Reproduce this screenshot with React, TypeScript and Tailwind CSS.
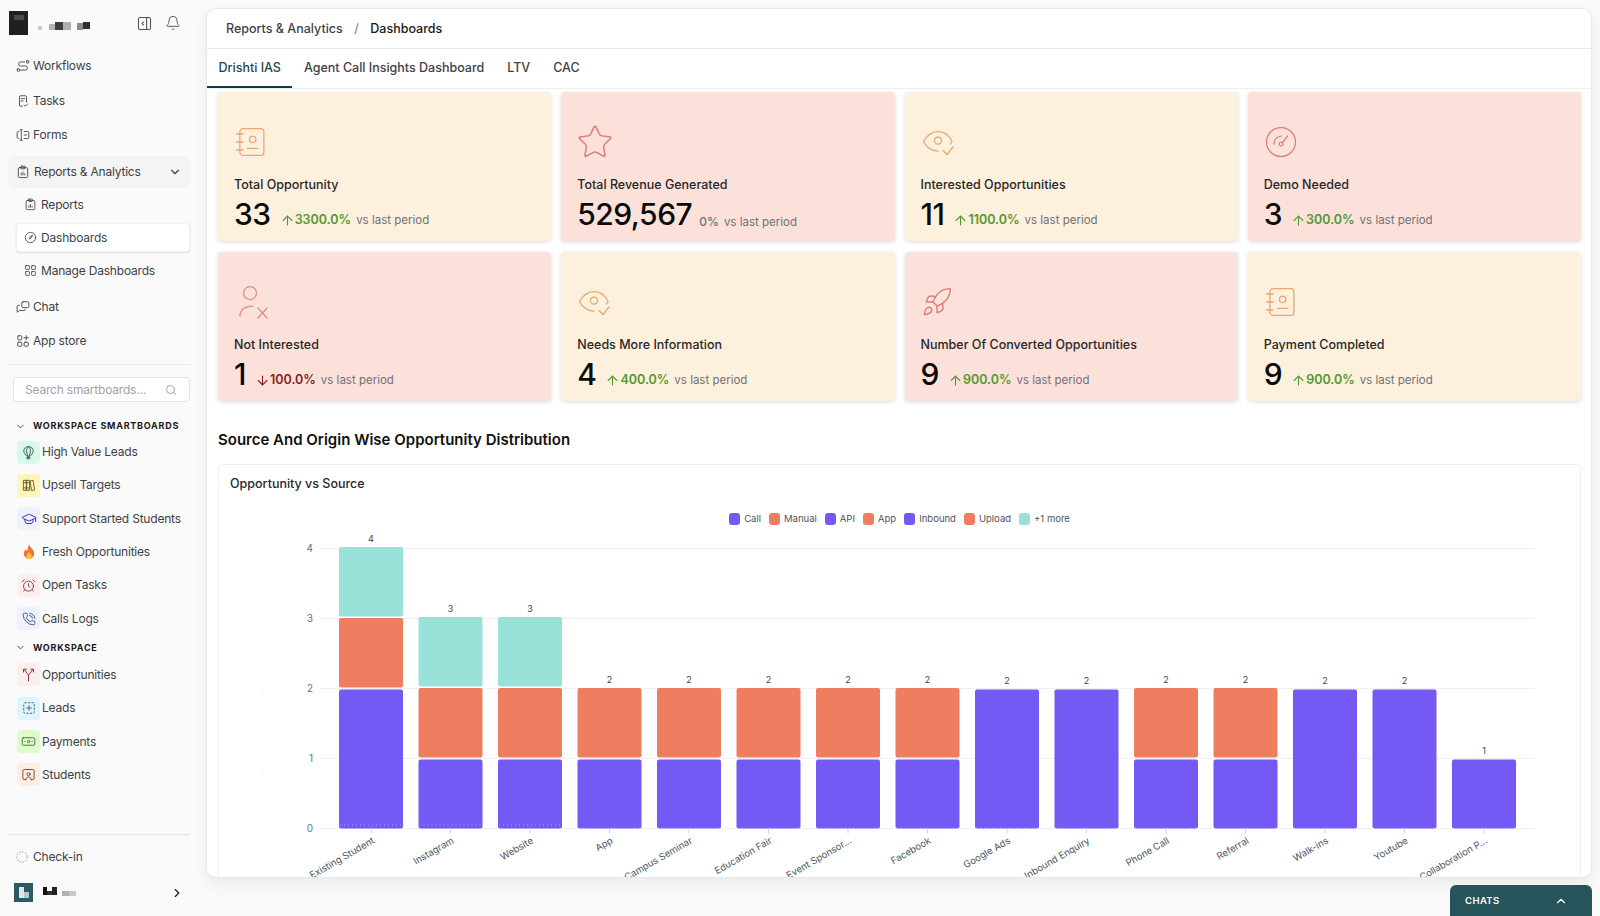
import React from "react";
import { ChevronDown, ChevronRight, ChevronUp, Search, Bell, Star, Rocket, ArrowUp, ArrowDown, GraduationCap, AlarmClock, PhoneCall, Banknote, LayoutGrid } from "lucide-react";

const S = ({ children, size = 16, sw = 1.5, className = "" }: { children: React.ReactNode; size?: number; sw?: number; className?: string }) => (
  <svg width={size} height={size} viewBox="0 0 24 24" fill="none" stroke="currentColor" strokeWidth={sw} strokeLinecap="round" strokeLinejoin="round" className={className}>
    {children}
  </svg>
);

const WorkflowIcon = () => (<S size={14}><rect x="2" y="17" width="4" height="4" rx="1" /><rect x="18" y="3" width="4" height="4" rx="1" /><path d="M7 19h9a3.5 3.5 0 0 0 0-7H8a3.5 3.5 0 0 1 0-7h7" /></S>);
const TasksIcon = () => (<S size={14}><path d="M11 21H8a2 2 0 0 1-2-2V5a2 2 0 0 1 2-2h8a2 2 0 0 1 2 2v9" /><path d="M9 8h6M9 12h3" /><path d="m14 19 2 2 4-4" /></S>);
const FormsIcon = () => (<S size={14}><path d="M5 6H4a2 2 0 0 0-2 2v8a2 2 0 0 0 2 2h1" /><path d="M14 6h6a2 2 0 0 1 2 2v8a2 2 0 0 1-2 2h-6" /><path d="M7 3h4M7 21h4M9 3v18" /><path d="M14 12h4" /></S>);
const DashIcon = () => (<S size={13}><circle cx="12" cy="12" r="9.5" /><path d="M15.5 8.5 13 13l-3 1.5 1-3.5z" /></S>);
const AppStoreIcon = () => (<S size={14}><rect x="3" y="3" width="7" height="7" rx="1.5" /><rect x="3" y="14" width="7" height="7" rx="1.5" /><rect x="14" y="14" width="7" height="7" rx="1.5" /><path d="M17.5 3v7M14 6.5h7" /></S>);
const PanelIcon = () => (<S size={17}><rect x="3.5" y="3.5" width="17" height="17" rx="2" /><path d="M15 3.5v17" /><path d="m10.5 10-2 2 2 2" /></S>);
const ReportIcon = ({ size = 14 }: { size?: number }) => (<S size={size}><rect x="4" y="4.500" width="16" height="17" rx="2" /><rect x="8.500" y="2" width="7" height="4.500" rx="1" /><path d="M9 17v-3M12 17v-5M15 17v-2" /></S>);
const ChatIcon = () => (<S size={14}><rect x="10" y="3" width="12" height="10" rx="2" /><path d="M6 9H4a2 2 0 0 0-2 2v10l4-3h8a2 2 0 0 0 2-2" /></S>);

const BookIcon = () => (
  <svg width="32" height="32" viewBox="0 0 30 30" fill="none" stroke="currentColor" strokeWidth="1.2" strokeLinecap="round" strokeLinejoin="round">
    <rect x="5.500" y="2.500" width="22.500" height="25" rx="3" />
    <path d="M2.500 7.500h6M2.500 15h6M2.500 22.500h6" />
    <circle cx="17.500" cy="12.500" r="3" />
    <path d="M12.500 21h10" />
  </svg>
);
const EyeCheckIcon = () => (
  <svg width="34" height="34" viewBox="0 0 34 34" fill="none" stroke="currentColor" strokeWidth="1.25" strokeLinecap="round" strokeLinejoin="round">
    <path d="M31 16.5C28 10 23 6.5 17 6.5S6 10 2.500 16.500C5.500 22.500 11 26 17 26" />
    <path d="M31 16.500c-.5 1-1 1.800-1.600 2.600" />
    <circle cx="17" cy="15.500" r="3.500" />
    <path d="m22 25.500 4 4 6-7.500" />
  </svg>
);
const GaugeIcon = () => (
  <svg width="32" height="32" viewBox="0 0 32 32" fill="none" stroke="currentColor" strokeWidth="1.25" strokeLinecap="round" strokeLinejoin="round" className="ml-[1px]">
    <circle cx="16" cy="16" r="14.500" />
    <circle cx="16" cy="18" r="1.800" />
    <path d="m17.500 16.500 5-6.500" />
    <path d="M9 18c0-4.500 3-7.500 7.500-8" />
  </svg>
);
const UserXIcon = () => (
  <svg width="36" height="36" viewBox="0 0 36 36" fill="none" stroke="currentColor" strokeWidth="1.25" strokeLinecap="round" strokeLinejoin="round">
    <circle cx="16" cy="9" r="6.500" />
    <path d="M6 32c0-6 5-10 13-10" />
    <path d="m24 24 9 10M33 24l-9 10" />
  </svg>
);
const RocketIcon = () => <Rocket size={32} strokeWidth={1.05} />;

const Balloon = () => (<S size={15} sw={1.6}><path d="M12 2.500c-4.500 0-7.500 3.200-7.500 7 0 4 3.500 6.500 5 8.500h5c1.500-2 5-4.500 5-8.500 0-3.800-3-7-7.500-7z" /><path d="M12 2.500c-2 1.500-3 4-3 7s1.200 6 2 8.500M12 2.500c2 1.500 3 4 3 7s-1.200 6-2 8.500" /><rect x="10" y="20" width="4" height="2" /></S>);
const Books = () => (<S size={14} sw={1.6}><rect x="3" y="4" width="5" height="17" /><rect x="8" y="4" width="5" height="17" /><path d="m14.500 5 4.500-1 2.500 16.500-4.500 1z" /><path d="M3 8h10M3 17h10" /></S>);
const Flame = () => (
  <svg width="14" height="16" viewBox="0 0 24 28">
    <path d="M12 1c1 5 9 8 9 16a9 9 0 0 1-18 0c0-4 2-6 3-8 1 2 2 3 3 3 1-4 1-7 3-11z" fill="#f4702c" />
    <path d="M12 13c1 3 5 4 5 8.500a5 5 0 0 1-10 0c0-3 3-5 5-8.500z" fill="#fbbf3d" />
  </svg>
);
const SplitY = () => (<S size={15} sw={1.6}><path d="M12 22v-9L5 4M12 13l7-9" /><path d="M4 8V3.500h4.500M15.500 3.500H20V8" /></S>);
const LeadsIcon = () => (<S size={14} sw={1.6}><path strokeDasharray="2.500 3.500" d="M5 3h14a2 2 0 0 1 2 2v14a2 2 0 0 1-2 2H5a2 2 0 0 1-2-2V5a2 2 0 0 1 2-2z" /><path d="M12 8v8M8 12h8" /></S>);
const StudentIcon = () => (<S size={15} sw={1.5}><path d="M7 20H5a2 2 0 0 1-2-2V6a2 2 0 0 1 2-2h14a2 2 0 0 1 2 2v12a2 2 0 0 1-2 2h-2" /><circle cx="12" cy="11.500" r="2.500" /><path d="M7.500 21c0-3 2-5 4.500-5s4.500 2 4.500 5" /></S>);

const cream = "bg-[#fdf0dd]";
const pink = "bg-[#fbe1d9]";
const cards = [
  { l: "Total Opportunity", v: "33", d: "3300.0%", bg: cream, ic: <BookIcon />, c: "text-[#eba56e]" },
  { l: "Total Revenue Generated", v: "529,567", d: "0%", bg: pink, ic: <Star size={38} strokeWidth={0.95} className="-ml-[1px]" />, c: "text-[#dc7f75]", flat: true },
  { l: "Interested Opportunities", v: "11", d: "1100.0%", bg: cream, ic: <EyeCheckIcon />, c: "text-[#eba56e]" },
  { l: "Demo Needed", v: "3", d: "300.0%", bg: pink, ic: <GaugeIcon />, c: "text-[#dc7f75]" },
  { l: "Not Interested", v: "1", d: "100.0%", bg: pink, ic: <UserXIcon />, c: "text-[#e08c80]", down: true },
  { l: "Needs More Information", v: "4", d: "400.0%", bg: cream, ic: <EyeCheckIcon />, c: "text-[#eba56e]" },
  { l: "Number Of Converted Opportunities", v: "9", d: "900.0%", bg: pink, ic: <RocketIcon />, c: "text-[#dc7f75]" },
  { l: "Payment Completed", v: "9", d: "900.0%", bg: cream, ic: <BookIcon />, c: "text-[#eba56e]" },
];

const Card = ({ l, v, d, bg, ic, c, flat, down }: any) => (
  <div className={`${bg} h-[149px] rounded-[4px] shadow-[0_1px_4px_rgba(0,0,0,0.14)] pl-[16px] flex flex-col`}>
    <div className={`h-[46px] mt-[27px] flex items-center ${c}`}>{ic}</div>
    <div className="mt-[11px] text-[12.500px] leading-[18px] font-medium text-[#27272a]">{l}</div>
    <div className="mt-0 flex items-baseline">
      <span className="text-[30px] leading-[40px] font-medium text-[#0a0a0a] tracking-[-0.5px]">{v}</span>
      {flat ? (
        <span className="ml-[7px] translate-y-[1px] text-[12px] font-medium text-[#71717a]">{d}</span>
      ) : (
        <span className={`ml-[9px] -translate-y-[1px] flex items-baseline text-[12.500px] font-semibold ${down ? "text-[#8b1a22]" : "text-[#4f9a2c]"}`}>
          {down ? <ArrowDown size={15} strokeWidth={1.7} className="self-center" /> : <ArrowUp size={15} strokeWidth={1.7} className="self-center" />}
          <span>{d}</span>
        </span>
      )}
      <span className={`ml-[5px] text-[11.500px] text-[#71717a] ${flat ? "translate-y-[1px]" : "-translate-y-[1px]"}`}>vs last period</span>
    </div>
  </div>
);

const navText = "text-[12px] tracking-[-0.2px] text-[#3f3f46]";
const Item = ({ icon, label }: any) => (
  <div className={`h-[34.500px] flex items-center pl-[16px] ${navText}`}>
    <span className="w-[17px] flex justify-start">{icon}</span>
    <span>{label}</span>
  </div>
);
const Sub = ({ icon, label }: any) => (
  <div className={`h-[33px] flex items-center pl-[24px] ${navText}`}>
    <span className="w-[17px] flex">{icon}</span>
    <span>{label}</span>
  </div>
);
const Board = ({ bg, color, icon, label }: any) => (
  <div className={`h-[33.300px] flex items-center pl-[17px] ${navText}`}>
    <span className={`w-[23px] h-[23px] rounded-[4px] flex items-center justify-center ${bg} ${color}`}>{icon}</span>
    <span className="ml-[2px]">{label}</span>
  </div>
);
const SectionHead = ({ label }: { label: string }) => (
  <div className="h-[19px] flex items-center pl-[15px] text-[9px] font-bold tracking-[0.75px] text-[#18181b]">
    <ChevronDown size={11} className="mr-[7px] text-[#3f3f46]" />
    {label}
  </div>
);

const P = "#7559f5", O = "#ef7d5f", T = "#9ae1da";
const bars: { n: string; s: string[] }[] = [
  { n: "Existing Student", s: ["2", "o", "t"] },
  { n: "Instagram", s: ["p", "o", "t"] },
  { n: "Website", s: ["p", "o", "t"] },
  { n: "App", s: ["p", "o"] },
  { n: "Campus Seminar", s: ["p", "o"] },
  { n: "Education Fair", s: ["p", "o"] },
  { n: "Event Sponsor...", s: ["p", "o"] },
  { n: "Facebook", s: ["p", "o"] },
  { n: "Google Ads", s: ["2"] },
  { n: "Inbound Enquiry", s: ["2"] },
  { n: "Phone Call", s: ["p", "o"] },
  { n: "Referral", s: ["p", "o"] },
  { n: "Walk-ins", s: ["2"] },
  { n: "Youtube", s: ["2"] },
  { n: "Collaboration P...", s: ["p"] },
];
const FONT = "Inter, sans-serif";
const OX = 219, OY = 532;
const Chart = () => {
  const yFor = (v: number) => 828.5 - v * 70 - OY;
  return (
    <svg width="1362" height="346" viewBox="0 0 1362 346" style={{ fontFamily: FONT }} className="block mt-[5.500px]">
      {[0, 1, 2, 3, 4].map((v) => (
        <g key={v}>
          <line x1={320 - OX} x2={1535 - OX} y1={yFor(v)} y2={yFor(v)} stroke="#eff0f2" />
          <text x={313 - OX} y={yFor(v) + 3.5} fontSize="10" fill="#6b7280" textAnchor="end">{v}</text>
        </g>
      ))}
      <circle cx={263 - OX} cy={691 - OY} r="0.500" fill="#c8c8c8" />
      <circle cx={263 - OX} cy={771 - OY} r="0.500" fill="#c8c8c8" />
      {bars.map((b, i) => {
        const cx = 371 + i * 79.5 - OX;
        let v = 0;
        const segs = b.s.map((k) => {
          const h = k === "2" ? 2 : 1;
          const from = v;
          v += h;
          return { from, to: v, fill: k === "2" || k === "p" ? P : k === "o" ? O : T };
        });
        const total = v;
        const labelGap = segs.length === 3 ? 7 : segs.length === 2 ? 6 : 5;
        return (
          <g key={b.n}>
            {segs.map((s, j) => (
              <rect key={j} x={cx - 32} width="64" y={yFor(s.to) + (j === 0 ? 1 : j === 1 ? -0.5 : -1.5)} height={j === 0 ? (s.to - s.from) * 70 - 1 : 69.5} rx="2" fill={s.fill} />
            ))}
            <line x1={cx - 31} x2={cx + 31} y1={yFor(0) - (i < 3 ? 3.5 : 0.5)} y2={yFor(0) - (i < 3 ? 3.5 : 0.5)} stroke="#ffffff" strokeOpacity="0.35" strokeDasharray="1 3" />
            <text x={cx} y={yFor(total) - labelGap} fontSize="9" fill="#3f3f46" textAnchor="middle">{total}</text>
            <line x1={cx} x2={cx} y1={yFor(0)} y2={yFor(0) + 5} stroke="#d4d4d8" />
            <text transform={`translate(${cx + 4} ${yFor(0) + 14}) rotate(-30)`} fontSize="9.500" fill="#4b5563" textAnchor="end">{b.n}</text>
          </g>
        );
      })}
    </svg>
  );
};

const legend: [string, string][] = [["Call", P], ["Manual", O], ["API", P], ["App", O], ["Inbound", P], ["Upload", O], ["+1 more", T]];

export default function App() {
  return (
    <div className="relative flex h-[916px] w-[1600px] overflow-hidden bg-[#fafafa] font-['Inter',sans-serif]">
      <aside className="w-[206px] shrink-0 flex flex-col h-full">
        <div className="h-[49px] flex items-start pt-[11px] pl-[9px] relative">
          <div className="w-[19px] h-[24px] bg-[#231f20] flex justify-center pt-[4px]"><div className="w-[10px] h-[5px] bg-[#4a4a4a]" /></div>
          <svg width="54" height="10" viewBox="0 0 54 10" className="ml-[10px] mt-[10px]">
            <rect x="0" y="5" width="4" height="4" fill="#c9c9c9" />
            <rect x="11" y="3" width="6" height="6" fill="#b5b5b5" />
            <rect x="17" y="1" width="8" height="8" fill="#3e3e3e" />
            <rect x="25" y="1" width="8" height="8" fill="#b0b0b0" />
            <rect x="39" y="2" width="6" height="7" fill="#8a8a8a" />
            <rect x="45" y="1" width="7" height="7" fill="#2f2f2f" />
          </svg>
          <span className="ml-[44px] mt-[4px] text-[#52525b]"><PanelIcon /></span>
          <span className="ml-[12px] mt-[4px] text-[#52525b]"><Bell size={16} strokeWidth={1.4} /></span>
        </div>
        <Item icon={<WorkflowIcon />} label="Workflows" />
        <Item icon={<TasksIcon />} label="Tasks" />
        <Item icon={<FormsIcon />} label="Forms" />
        <div className={`mt-[3.500px] ml-[8px] mr-[16px] h-[32px] rounded-[6px] bg-[#f4f4f5] flex items-center pl-[8px] pr-[8px] ${navText}`}>
          <span className="mr-[4px]"><ReportIcon /></span>
          <span>Reports &amp; Analytics</span>
          <ChevronDown size={14} className="ml-auto" />
        </div>
        <Sub icon={<ReportIcon size={13} />} label="Reports" />
        <div className="h-[33px] flex items-center ml-[16px] mr-[16px]">
          <div className={`h-[29px] w-full bg-white rounded-[4px] shadow-[0_1px_2px_rgba(0,0,0,0.12)] border border-[#f1f1f2] flex items-center pl-[7px] ${navText}`}>
            <span className="w-[17px] flex"><DashIcon /></span>Dashboards
          </div>
        </div>
        <Sub icon={<LayoutGrid size={13} strokeWidth={1.5} />} label="Manage Dashboards" />
        <div className="h-[2.500px]" />
        <Item icon={<ChatIcon />} label="Chat" />
        <Item icon={<AppStoreIcon />} label="App store" />
        <div className="mx-[8px] mr-[16px] mt-[5.500px] border-t border-[#ececee]" />
        <div className="mt-[12px] ml-[13px] mr-[16px] h-[25px] rounded-[4px] border border-[#e4e4e7] bg-white flex items-center pl-[11px] pr-[12px] text-[12px] tracking-[-0.2px] text-[#a1a1aa]">
          <span>Search smartboards...</span>
          <Search size={12} className="ml-auto" />
        </div>
        <div className="h-[14.500px]" />
        <SectionHead label="WORKSPACE SMARTBOARDS" />
        <Board bg="bg-[#d8f8ea]" color="text-[#3d6b58]" icon={<Balloon />} label="High Value Leads" />
        <Board bg="bg-[#fdf5b9]" color="text-[#6b5a24]" icon={<Books />} label="Upsell Targets" />
        <Board bg="bg-[#f1f1fe]" color="text-[#3730c4]" icon={<GraduationCap size={16} strokeWidth={1.5} />} label="Support Started Students" />
        <Board bg="" color="" icon={<Flame />} label="Fresh Opportunities" />
        <Board bg="bg-[#fdeeee]" color="text-[#8f3a40]" icon={<AlarmClock size={15} strokeWidth={1.5} />} label="Open Tasks" />
        <Board bg="bg-[#eef2fd]" color="text-[#334a7d]" icon={<PhoneCall size={14} strokeWidth={1.5} />} label="Calls Logs" />
        <div className="h-[3px]" />
        <SectionHead label="WORKSPACE" />
        <div className="h-[1px]" />
        <Board bg="bg-[#fdeeee]" color="text-[#96323c]" icon={<SplitY />} label="Opportunities" />
        <Board bg="bg-[#dff5fe]" color="text-[#3b6076]" icon={<LeadsIcon />} label="Leads" />
        <Board bg="bg-[#defcc9]" color="text-[#4a7041]" icon={<Banknote size={15} strokeWidth={1.5} />} label="Payments" />
        <Board bg="bg-[#fdeee3]" color="text-[#7c4a32]" icon={<StudentIcon />} label="Students" />
        <div className="mt-auto mx-[8px] mr-[16px] border-t border-[#e6e6e8] shadow-[0_1px_2px_rgba(0,0,0,0.05)]" />
        <div className={`h-[43px] flex items-center pl-[16px] ${navText}`}>
          <svg width="12" height="12" viewBox="0 0 12 12" className="mr-[5px]"><circle cx="6" cy="6" r="5.200" fill="none" stroke="#9a9aa0" strokeDasharray="1.500 1.500" /></svg>
          Check-in
        </div>
        <div className="h-[38px] flex items-start pl-[14px] pr-[22px]">
          <div className="w-[19px] h-[19px] bg-[#2a5a63] relative mt-[5px]"><div className="absolute left-[5px] top-[4px] w-[5px] h-[11px] bg-[#dfe6e6]" /><div className="absolute left-[10px] top-[9px] w-[5px] h-[6px] bg-[#b7c7c9]" /></div>
          <svg width="34" height="10" viewBox="0 0 34 10" className="ml-[10px] mt-[9px]">
            <rect x="0" y="0" width="4" height="8" fill="#111" />
            <rect x="4" y="4" width="5" height="4" fill="#333" />
            <rect x="9" y="0" width="5" height="8" fill="#222" />
            <rect x="19" y="4" width="7" height="5" fill="#b0b0b0" />
            <rect x="26" y="4" width="7" height="5" fill="#c8c8c8" />
          </svg>
          <ChevronRight size={14} className="ml-auto mt-[8px] text-[#18181b]" />
        </div>
      </aside>

      <main className="mt-[8px] w-[1386px] h-[870px] bg-white rounded-[10px] border border-[#e9e9ea] shadow-[0_6px_16px_rgba(0,0,0,0.07)] overflow-hidden flex flex-col">
        <div className="h-[40px] shrink-0 border-b border-[#e8e8ea] flex items-center pl-[19px] pt-[1px] text-[12.500px]">
          <span className="font-medium text-[#3f3f46]">Reports &amp; Analytics</span>
          <span className="mx-[11.500px] text-[#71717a]">/</span>
          <span className="font-medium text-[#18181b]">Dashboards</span>
        </div>
        <div className="h-[40px] shrink-0 border-b border-[#efeff0] flex items-stretch text-[12.500px] font-medium text-[#3f3f46]">
          <div className="px-[11.500px] flex items-center text-[#1d4a50] border-y-2 border-t-transparent border-b-[#0f3d45]">Drishti IAS</div>
          <div className="px-[11.500px] flex items-center">Agent Call Insights Dashboard</div>
          <div className="px-[11.500px] flex items-center">LTV</div>
          <div className="px-[11.500px] flex items-center">CAC</div>
        </div>
        <div className="pl-[11px] pr-[10px] pt-[3px] flex-1 min-h-0">
          <div className="grid grid-cols-4 gap-x-[10px] gap-y-[11px]">
            {cards.map((c) => <Card key={c.l} {...c} />)}
          </div>
          <h2 className="mt-[28px] text-[15px] leading-[22px] font-semibold text-[#111]">Source And Origin Wise Opportunity Distribution</h2>
          <div className="mt-[13px] border border-[#efeff0] rounded-[4px] h-[460px]">
            <div className="pl-[11px] pt-[10px] text-[12.500px] leading-[18px] font-medium text-[#27272a]">Opportunity vs Source</div>
            <div className="mt-[19px] flex justify-center items-center gap-[8px] text-[9.500px] text-[#52525b] h-[14px]">
              {legend.map(([t, c]) => (
                <span key={t} className="flex items-center gap-[4px]">
                  <span className="w-[11px] h-[12px] rounded-[3px]" style={{ background: c }} />
                  {t}
                </span>
              ))}
            </div>
            <Chart />
          </div>
        </div>
      </main>

      <div className="absolute right-[8px] bottom-0 w-[142px] h-[31px] rounded-t-[6px] bg-[#27545a] flex items-center pl-[15px] pr-[24px] pt-[1px] text-[9.500px] font-semibold tracking-[0.4px] text-white">
        CHATS
        <ChevronUp size={14} className="ml-auto" />
      </div>
    </div>
  );
}
